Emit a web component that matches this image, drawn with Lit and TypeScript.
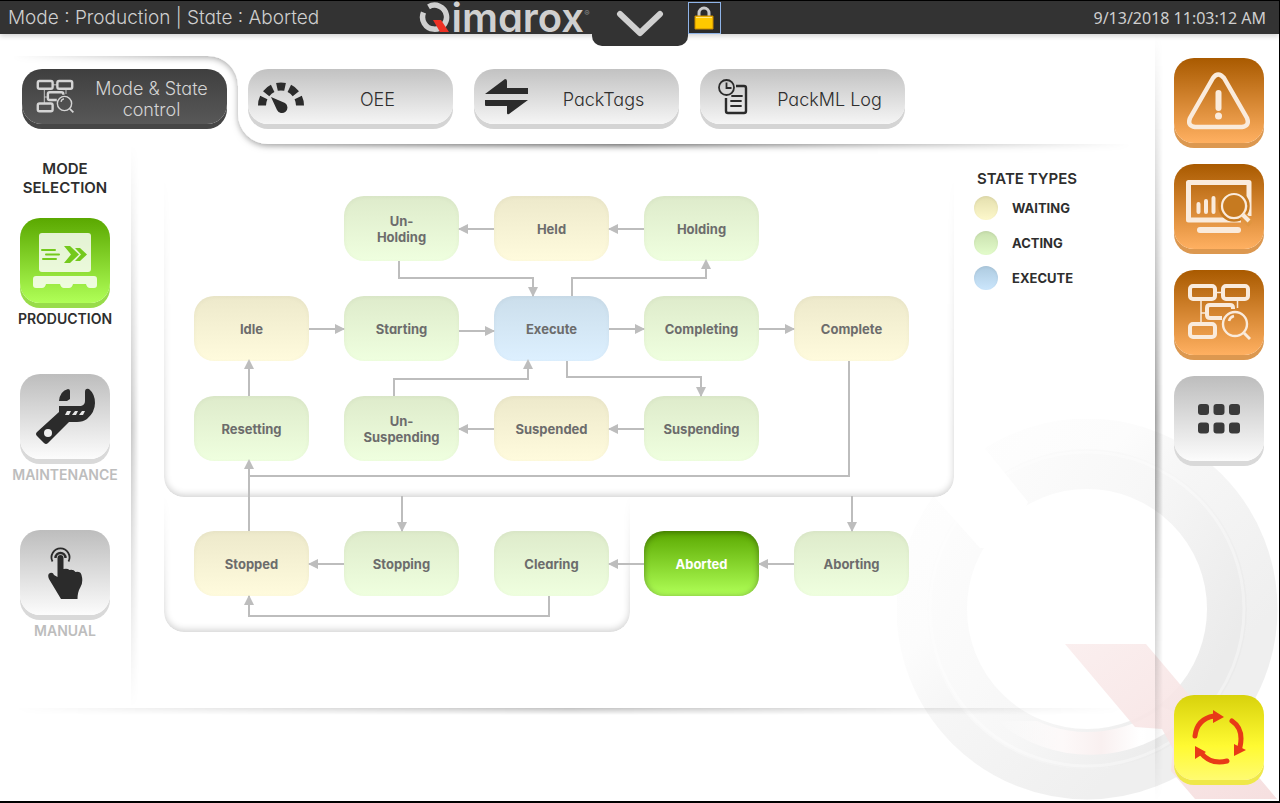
import { LitElement, html, css, svg, nothing } from "lit";
import { customElement, property, state } from "lit/decorators.js";
import { classMap } from "lit/directives/class-map.js";
import { styleMap } from "lit/directives/style-map.js";

type Kind = "waiting" | "acting" | "execute";

interface StateNode {
  label: string;
  kind: Kind;
  x: number;
  y: number;
}

const COLS = [30, 180, 330, 480, 630];
const ROWS = [52, 152, 252, 387];

const NODES: StateNode[] = [
  { label: "Un-\nHolding", kind: "acting", x: COLS[1], y: ROWS[0] },
  { label: "Held", kind: "waiting", x: COLS[2], y: ROWS[0] },
  { label: "Holding", kind: "acting", x: COLS[3], y: ROWS[0] },
  { label: "Idle", kind: "waiting", x: COLS[0], y: ROWS[1] },
  { label: "Starting", kind: "acting", x: COLS[1], y: ROWS[1] },
  { label: "Execute", kind: "execute", x: COLS[2], y: ROWS[1] },
  { label: "Completing", kind: "acting", x: COLS[3], y: ROWS[1] },
  { label: "Complete", kind: "waiting", x: COLS[4], y: ROWS[1] },
  { label: "Resetting", kind: "acting", x: COLS[0], y: ROWS[2] },
  { label: "Un-\nSuspending", kind: "acting", x: COLS[1], y: ROWS[2] },
  { label: "Suspended", kind: "waiting", x: COLS[2], y: ROWS[2] },
  { label: "Suspending", kind: "acting", x: COLS[3], y: ROWS[2] },
  { label: "Stopped", kind: "waiting", x: COLS[0], y: ROWS[3] },
  { label: "Stopping", kind: "acting", x: COLS[1], y: ROWS[3] },
  { label: "Clearing", kind: "acting", x: COLS[2], y: ROWS[3] },
  { label: "Aborted", kind: "acting", x: COLS[3], y: ROWS[3] },
  { label: "Aborting", kind: "acting", x: COLS[4], y: ROWS[3] },
];

/* Connector routes in canvas coordinates; each one ends at its arrow tip. */
const ROUTES = [
  "M330 85H295",
  "M480 85H445",
  "M145 185H181",
  "M295 187H331",
  "M445 185H481",
  "M595 185H631",
  "M235 117V134H369V153",
  "M408 152V134H542V115",
  "M85 252V215",
  "M230 252V235H364V215",
  "M403 215V233H537V253",
  "M330 285H295",
  "M480 285H445",
  "M685 217V332H85",
  "M85 387V315",
  "M238 352V388",
  "M688 352V388",
  "M180 420H145",
  "M480 420H445",
  "M630 420H595",
  "M385 452V472H85V451",
];

const arrowHead = (route: string) => {
  const nums = route.match(/[MHV][^MHV]*/g)!;
  let x = 0;
  let y = 0;
  let dir = "";
  for (const n of nums) {
    const v = n.slice(1).split(" ").map(Number);
    if (n[0] === "M") [x, y] = v;
    if (n[0] === "H") {
      dir = v[0] > x ? "r" : "l";
      x = v[0];
    }
    if (n[0] === "V") {
      dir = v[0] > y ? "d" : "u";
      y = v[0];
    }
  }
  const d = {
    r: `M${x} ${y}l-10-5v10z`,
    l: `M${x - 1} ${y}l10-5v10z`,
    d: `M${x} ${y}l-5-10h10z`,
    u: `M${x} ${y}l-5 10h10z`,
  }[dir];
  return svg`<path d=${d} fill="#bdbdbd" />`;
};

const flowIcon = (size: number, weight: number) => html`
  <svg width=${size} height=${size} viewBox="0 0 64 64" fill="none" stroke="currentColor" aria-hidden="true">
    <g stroke-width=${weight}>
      <rect x="3" y="5" width="25" height="13" rx="3" />
      <rect x="36" y="5" width="25" height="13" rx="3" />
      <rect x="3" y="43" width="25" height="13" rx="3" />
      <path d="M46 28v-1q0-3-3-3H23q-3 0-3 3v7q0 3 3 3h12" />
    </g>
    <path stroke-width="1.500" d="M28 11.500h8M14 18v25M14 32h6M50.500 18v9" />
    <circle cx="48" cy="43" r="12" stroke-width="2.400" />
    <path d="M42 40q1-4 5-5" stroke-width="2.500" />
    <path d="M57 52l6 6" stroke-width="3" />
  </svg>
`;

const gaugeIcon = html`
  <svg width="46" height="34" viewBox="0 0 46 34" aria-hidden="true">
    <path d="M4 25.500A19 19 0 0 1 42 25.500" pathLength="100" fill="none" stroke="#2b2b2b" stroke-width="8"
      stroke-dasharray="14 7.500" />
    <path d="M13 17l14 6a5.500 5.500 0 1 1-8 7z" fill="#2b2b2b" />
  </svg>
`;

const swapIcon = html`
  <svg width="44" height="36" viewBox="0 0 44 36" fill="#2b2b2b" aria-hidden="true">
    <path d="M0 15L20 0q2 0 2 2v7h21v6zM0 21h43L24 35q-2 1-2-1v-7H1q-1 0-1-1z" />
  </svg>
`;

const logIcon = html`
  <svg width="30" height="36" viewBox="0 0 30 36" fill="none" stroke="#2b2b2b" aria-hidden="true">
    <circle cx="8.500" cy="8.500" r="7.500" stroke-width="1.800" />
    <path d="M8.500 3.500v5.500h5" stroke-width="1.800" />
    <path d="M18 7h8q2 0 2 2v23q0 2-2 2H10q-2 0-2-2V19" stroke-width="2.400" />
    <path d="M14 17h10M13 22h10M13 27h10" stroke-width="1.800" stroke-linecap="round" />
  </svg>
`;

const palletIcon = html`
  <svg width="64" height="56" viewBox="0 0 64 56" aria-hidden="true">
    <rect x="6" width="52" height="39" rx="3" fill="#fff" fill-opacity=".82" />
    <path d="M3 43h58q3 0 3 3v6q0 3-3 3h-4q-3 0-4-4h-13q-1 4-4 4h-5q-3 0-4-4H13q-1 4-4 4H3q-3 0-3-3v-6q0-3 3-3z"
      fill="#fff" fill-opacity=".82" />
    <path d="M9 17h13M13 21.500h13M10 26h13" stroke="#74c91c" stroke-width="2" stroke-linecap="round" />
    <path d="M31 13h6l9 8.500-9 8.500h-6l7-8.500z" fill="#74c91c" />
    <path d="M42 15h5l7 6.500-7 6.500h-5l6-6.500z" fill="#74c91c" />
  </svg>
`;

const wrenchIcon = html`
  <svg width="60" height="58" viewBox="0 0 60 58" aria-hidden="true">
    <path
      d="M24 13Q25 3 33 1q2 0 2 2v8l-3 2zM24 18h22q4-1 4-5V4q0-4 4-3q6 5 6 14q0 9-8 16q-4 3-10 3H34L13 55q-2 2-4 0l-7-7q-2-2 0-4L24 24z"
      fill="#2b2b2b" />
    <circle cx="13" cy="45" r="4" fill="#efefef" />
    <path d="M32 23h4l-2 4h-4zM40 23h3l-2 4h-4zM47 23h3l-2 4h-4z" fill="#e6e6e6" />
  </svg>
`;

const tapIcon = html`
  <svg width="36" height="54" viewBox="0 0 36 54" aria-hidden="true">
    <path d="M5.500 15.500a9 9 0 1 1 16 0" fill="none" stroke="#2b2b2b" stroke-width="1.800" />
    <path d="M8.500 12a5 5 0 1 1 10 0" fill="none" stroke="#2b2b2b" stroke-width="2.400" />
    <path
      d="M10.500 31V12q0-3 3-3t3 3v11q4-1 6 1q4-1 6 2q5-1 6 3q2 7-1 12q-3 5-3 12H14L2 33q-2-5 1-6t4 2z"
      fill="#2b2b2b" />
  </svg>
`;

const alertIcon = html`
  <svg width="64" height="58" viewBox="0 0 64 58" fill="none" stroke="currentColor" aria-hidden="true">
    <path d="M26 6q5-7 11 0l23 40q3 8-5 9H8q-8-1-5-9z" stroke-width="4.500" stroke-linejoin="round" />
    <path d="M31.500 21v15" stroke-width="6" stroke-linecap="round" />
    <circle cx="31.500" cy="44" r="3.500" fill="currentColor" stroke="none" />
  </svg>
`;

const monitorIcon = html`
  <svg width="66" height="54" viewBox="0 0 66 54" fill="none" stroke="currentColor" aria-hidden="true">
    <path d="M63 36V2.500H2.500V40H55" stroke-width="5" stroke-linejoin="round" />
    <path d="M12.500 24v8M20 21v11M27.500 18v14" stroke-width="4" stroke-linecap="round" />
    <circle cx="48" cy="26" r="14.500" stroke="#c67a20" stroke-width="2.500" />
    <path d="M56 35l9 9" stroke="#e09540" stroke-width="8" />
    <circle cx="48" cy="26" r="12" fill="#c67a20" stroke-width="2.200" />
    <path d="M57 35l6 6" stroke-width="4" />
    <path d="M14 50h38" stroke-width="6" stroke-linecap="round" />
  </svg>
`;

const gridIcon = html`
  <svg width="42" height="30" viewBox="0 0 42 30" fill="#3a3a3a" aria-hidden="true">
    ${[0, 15.5, 31].map((x) => [0, 18.5].map((y) => svg`<rect x=${x} y=${y} width="11" height="11" rx="3" />`))}
  </svg>
`;

const cycleIcon = html`
  <svg width="54" height="56" viewBox="0 0 54 56" fill="#e83a17" aria-hidden="true">
    <g fill="none" stroke="#e83a17" stroke-width="5" stroke-linecap="round">
      <path d="M3 26Q5 9 22 6" />
      <path d="M40 11Q52 19 48 37" />
      <path d="M35 51Q19 55 9 43" />
    </g>
    <path d="M21 0l11 7-11 6zM42 34l12 6-12 6zM3 36l11 6-11 7z" />
  </svg>
`;

@customElement("ring-watermark")
export class RingWatermark extends LitElement {
  static styles = css`
    :host {
      display: block;
    }
    .art {
      display: block;
    }
  `;

  render() {
    return html`
      <svg class="art" width="382" height="382" viewBox="-190 -190 382 382" aria-hidden="true">
        <defs>
          <linearGradient id="outer" gradientUnits="userSpaceOnUse" x1="-120" y1="-190" x2="130" y2="60">
            <stop offset="0" stop-color="#fefefe" />
            <stop offset="0.350" stop-color="#fcfcfc" />
            <stop offset="0.550" stop-color="#f6f6f6" />
            <stop offset="1" stop-color="#efefef" />
          </linearGradient>
          <linearGradient id="inner" gradientUnits="userSpaceOnUse" x1="-120" y1="-100" x2="140" y2="40">
            <stop offset="0" stop-color="#fcfcfc" />
            <stop offset="0.500" stop-color="#f7f7f7" />
            <stop offset="1" stop-color="#ebebeb" />
          </linearGradient>
          <linearGradient id="glint" x1="0" x2="1">
            <stop offset="0" stop-color="#fff" stop-opacity="0" />
            <stop offset="0.350" stop-color="#fdf9f9" />
            <stop offset="0.550" stop-color="#f9f0f0" />
            <stop offset="0.750" stop-color="#fff" />
            <stop offset="1" stop-color="#fff" stop-opacity="0.800" />
          </linearGradient>
          <linearGradient id="tail" x1="0" y1="0" x2="1" y2="1">
            <stop offset="0" stop-color="#faeded" />
            <stop offset="1" stop-color="#f5dcdc" />
          </linearGradient>
          <mask id="gap">
            <rect x="-190" y="-190" width="384" height="384" fill="#fff" />
            <path d="M-107-61L-222-190H-126L-59-107L-80-60z" fill="#000" />
          </mask>
        </defs>
        <g fill="none" mask="url(#gap)">
          <circle r="175" stroke="url(#outer)" stroke-width="31" />
          <circle r="140" stroke="url(#inner)" stroke-width="40" />
          <circle r="157" stroke="#fff" stroke-opacity="0.350" stroke-width="3" />
        </g>
        <path d="M-90 112A144 144 0 0 0 100 108L75 98A122 122 0 0 1-50 112z" fill="url(#glint)" />
        <path d="M-22 35H59L190 190H108L84 162L86 140L75 120L48 118z" fill="url(#tail)" fill-opacity="0.900" />
      </svg>
    `;
  }
}

@customElement("tile-button")
export class TileButton extends LitElement {
  @property() tone = "grey";
  @property() label = "";

  static styles = css`
    :host {
      display: block;
      height: 90px;
    }
    .tile {
      display: flex;
      align-items: center;
      justify-content: center;
      width: 90px;
      height: 85px;
      padding: 0;
      border: 0;
      border-radius: 20px;
      cursor: pointer;
    }
    .grey {
      background: linear-gradient(#bdbdbd, #fcfcfc);
      box-shadow: 0 5px 0 #d9d9d9;
    }
    .green {
      background: linear-gradient(#5aa800, #b0ff57);
      box-shadow: 0 5px 0 #98dc4a;
    }
    .orange {
      color: #faebdc;
      background: linear-gradient(#a95a00, #ffb061);
      box-shadow: 0 5px 0 #dc9850;
    }
    .yellow {
      background: linear-gradient(#d8d20c, #fffa32 60%, #fffb70);
      box-shadow: 0 5px 0 #efe84a;
    }
  `;

  render() {
    return html`
      <button class=${classMap({ tile: true, [this.tone]: true })} type="button" aria-label=${this.label}>
        <slot></slot>
      </button>
    `;
  }
}

@customElement("state-diagram")
export class StateDiagram extends LitElement {
  @property() current = "";

  static styles = css`
    :host {
      display: block;
      position: relative;
      width: 790px;
      height: 564px;
    }
    .frame {
      position: absolute;
      left: 0;
      box-sizing: border-box;
      border-radius: 0 0 20px 20px;
      box-shadow: inset 0 -2px 7px #00000030;
      mask-image: linear-gradient(transparent, #000 80%);
    }
    .running {
      top: 32px;
      width: 790px;
      height: 321px;
    }
    .stopping {
      top: 352px;
      width: 466px;
      height: 136px;
    }
    .routes {
      position: absolute;
      inset: 0;
    }
    .node {
      position: absolute;
      display: flex;
      align-items: center;
      justify-content: center;
      width: 115px;
      height: 65px;
      border-radius: 20px;
      box-shadow: inset 0 1px 5px #0000000a;
      color: #6c6c6c;
      font-size: 13px;
      font-weight: 700;
      line-height: 16px;
      text-align: center;
      white-space: pre-line;
    }
    .waiting {
      background: linear-gradient(#ede9cb, #fffbdd);
    }
    .acting {
      background: linear-gradient(#deebcb, #efffdf);
    }
    .execute {
      background: linear-gradient(#cbdeeb, #ddf0ff);
    }
    .current {
      color: #fff;
      background: linear-gradient(#5aa800, #b0ff57);
      box-shadow: inset 0 1px 6px #00000060;
    }
  `;

  render() {
    return html`
      <div class="frame running"></div>
      <div class="frame stopping"></div>
      <svg class="routes" width="790" height="564" aria-hidden="true">
        <g fill="none" stroke="#bdbdbd" stroke-width="2">${ROUTES.map((d) => svg`<path d=${d} />`)}</g>
      </svg>
      ${NODES.map(
        (n) => html`
          <div
            class=${classMap({ node: true, [n.kind]: true, current: n.label === this.current })}
            style=${styleMap({ left: `${n.x}px`, top: `${n.y}px` })}
          >${n.label}</div>
        `,
      )}
      <svg class="routes" width="790" height="564" aria-hidden="true">
        ${ROUTES.map((d) => (d.endsWith("V332H85") ? nothing : arrowHead(d)))}
      </svg>
    `;
  }
}

@customElement("app-root")
export class AppRoot extends LitElement {
  @state() private mode = "Production";
  @state() private machineState = "Aborted";

  static styles = css`
    :host {
      display: flex;
      flex-direction: column;
      position: relative;
      box-sizing: border-box;
      min-height: 100vh;
      overflow: hidden;
      border: solid #000;
      border-width: 1px 1px 2px 0;
      background: #fff;
      color: #2e2e2e;
      font-family: "Century Gothic", Inter, "Noto Sans", sans-serif;
      font-feature-settings: "cv11";
    }
    .watermark {
      position: absolute;
      right: 0;
      bottom: 0;
    }
    .bar {
      position: relative;
      z-index: 1;
      display: grid;
      grid-template: 33px / 1fr 96px 1fr;
      background: #333;
      color: #cfcfcf;
      box-shadow: 0 2px 5px #0000002e;
    }
    .bar-left,
    .bar-right {
      display: flex;
      align-items: center;
      justify-content: space-between;
    }
    .bar-left {
      padding: 0 2px 0 8px;
    }
    .bar-right {
      padding-right: 13px;
    }
    .status {
      font-size: 19px;
      font-weight: 300;
    }
    .brand {
      display: flex;
      align-items: center;
      height: 33px;
      color: #d0d0d0;
      font-size: 40px;
      font-weight: 600;
      line-height: 33px;
    }
    .reg {
      align-self: flex-start;
      font-size: 8px;
      font-weight: 400;
      line-height: 24px;
      color: #888;
    }
    .pull {
      display: flex;
      align-items: center;
      justify-content: center;
      height: 45px;
      padding: 0;
      border: 0;
      border-radius: 0 0 10px 10px;
      background: #333;
    }
    .lock {
      display: flex;
      align-items: center;
      justify-content: center;
      box-sizing: border-box;
      width: 33px;
      height: 32px;
      padding: 0;
      border: 1px solid #8fb4e8;
      background: #2b2b2b;
    }
    .clock {
      font-family: "Noto Sans", sans-serif;
      font-size: 16px;
    }
    .body {
      position: relative;
      display: flex;
      flex: 1;
    }
    .main {
      flex: 1;
      min-width: 0;
    }
    .tabs {
      position: relative;
      display: flex;
      gap: 21px;
      height: 60px;
      padding: 35px 22px 15px;
    }
    .cutout {
      position: absolute;
      left: 0;
      top: 0;
      width: 100%;
      height: 125px;
    }
    .tab {
      position: relative;
      display: grid;
      grid-template-columns: 46px 1fr;
      column-gap: 4px;
      align-items: center;
      box-sizing: border-box;
      width: 205px;
      height: 55px;
      padding: 5px 6px 0 10px;
      border: 0;
      border-radius: 20px;
      background: linear-gradient(#c2c2c2, #f5f5f5);
      box-shadow: 0 5px 0 #d4d4d4;
      color: #2e2e2e;
      font: inherit;
      font-size: 18px;
      font-weight: 300;
      line-height: 21px;
      cursor: pointer;
    }
    .tab-icon {
      display: flex;
      justify-content: center;
      margin-top: -5px;
    }
    .selected {
      background: linear-gradient(#3f3f3f, #585858);
      box-shadow: 0 5px 0 #464646;
      color: #d4d4d4;
    }
    .content {
      display: flex;
    }
    .modes {
      width: 130px;
      padding-top: 15px;
    }
    .title {
      margin: 0;
      font-size: 15px;
      font-weight: 600;
      line-height: 19px;
      text-align: center;
    }
    .mode-list {
      display: flex;
      flex-direction: column;
      gap: 42px;
      margin: 21px 0 0;
      padding: 0;
      list-style: none;
    }
    .mode {
      display: flex;
      flex-direction: column;
      align-items: center;
      height: 114px;
      color: #bdbdbd;
      font-size: 14px;
      font-weight: 600;
      line-height: 22px;
    }
    .chosen {
      color: #2e2e2e;
    }
    .rule {
      width: 8px;
      margin-left: 1px;
      background: linear-gradient(90deg, #00000038, #00000000);
      mask-image: linear-gradient(transparent, #000 50%, transparent);
    }
    .diagram {
      margin-left: 25px;
    }
    .legend {
      padding: 25px 0 0 20px;
    }
    .legend-title {
      padding-left: 3px;
      line-height: 20px;
    }
    .keys {
      display: flex;
      flex-direction: column;
      gap: 11px;
      margin: 7px 0 0;
      padding: 0;
      list-style: none;
    }
    .key {
      display: flex;
      align-items: center;
      gap: 14px;
      font-size: 13px;
      font-weight: 700;
      line-height: 24px;
    }
    .dot {
      width: 24px;
      height: 24px;
      border-radius: 50%;
      box-shadow: inset 0 1px 3px #00000010;
    }
    .waiting {
      background: linear-gradient(#e4dfae, #fdf8cb);
    }
    .acting {
      background: linear-gradient(#c9e0ae, #e3fccb);
    }
    .execute {
      background: linear-gradient(#aecbe0, #cbe6fc);
    }
    .floor {
      height: 7px;
      margin: 0 30px 0 14px;
      background: linear-gradient(#0000003d, #00000000);
      mask-image: linear-gradient(90deg, transparent, #000 50%, transparent);
    }
    .side-rule {
      width: 8px;
      background: linear-gradient(90deg, #00000060, #00000000);
      mask-image: linear-gradient(transparent, #000 50%, transparent);
    }
    .side {
      display: flex;
      flex-direction: column;
      gap: 16px;
      padding: 24px 15px 16px 11px;
    }
    .refresh {
      margin-top: auto;
    }
  `;

  private tab(label: string, icon: unknown, selected = false) {
    return html`
      <button class=${classMap({ tab: true, selected })} type="button" role="tab" aria-selected=${selected}>
        <span class="tab-icon">${icon}</span>
        <span>${label}</span>
      </button>
    `;
  }

  private modeItem(label: string, icon: unknown) {
    const chosen = label === this.mode.toUpperCase();
    return html`
      <li class=${classMap({ mode: true, chosen })}>
        <tile-button tone=${chosen ? "green" : "grey"} label=${label} @click=${() => this.pick(label)}>
          ${icon}
        </tile-button>
        <span>${label}</span>
      </li>
    `;
  }

  private pick(label: string) {
    this.mode = label[0] + label.slice(1).toLowerCase();
  }

  render() {
    return html`
      <ring-watermark class="watermark"></ring-watermark>
      <header class="bar">
        <div class="bar-left">
          <span class="status">Mode : ${this.mode} | State : ${this.machineState}</span>
          <span class="brand">
            <svg width="32" height="32" viewBox="0 0 32 32" aria-hidden="true">
              <path d="M9.500 4.800A12 12 0 1 1 4.500 10.500" fill="none" stroke="#d0d0d0" stroke-width="5.500" />
              <path d="M14 18h8l8 12h-9z" fill="#ee3124" />
            </svg>
            <span>imarox</span><span class="reg">®</span>
          </span>
        </div>
        <button class="pull" type="button" aria-label="Open menu">
          <svg width="48" height="28" viewBox="0 0 48 28" fill="none" aria-hidden="true">
            <path d="M4 4l20 19L44 4" stroke="#d0d0d0" stroke-width="6" stroke-linecap="round" stroke-linejoin="round" />
          </svg>
        </button>
        <div class="bar-right">
          <button class="lock" type="button" aria-label="Lock">
            <svg width="20" height="24" viewBox="0 0 20 24" aria-hidden="true">
              <path d="M5 11V7a5 5 0 0 1 10 0v4" fill="none" stroke="#c9c9c9" stroke-width="3" />
              <path d="M1 10h18v13H1z" fill="#ffc800" stroke="#c98a00" />
              <path d="M2 11h16v1H2z" fill="#ffe680" />
            </svg>
          </button>
          <time class="clock">9/13/2018 11:03:12 AM</time>
        </div>
      </header>
      <div class="body">
        <main class="main">
          <div class="tabs" role="tablist">
            <svg class="cutout" aria-hidden="true">
              <defs>
                <linearGradient id="fade">
                  <stop offset="0.010" stop-color="#fff" stop-opacity="0" />
                  <stop offset="0.150" stop-color="#fff" stop-opacity="0.450" />
                  <stop offset="0.540" stop-color="#fff" />
                  <stop offset="0.980" stop-color="#fff" stop-opacity="0" />
                </linearGradient>
                <mask id="sides" maskUnits="userSpaceOnUse" x="0" y="0" width="100%" height="125">
                  <rect width="100%" height="125" fill="url(#fade)" />
                </mask>
                <filter id="cast" filterUnits="userSpaceOnUse" x="-20" y="0" width="3000" height="125">
                  <feDropShadow dx="0" dy="2" stdDeviation="3" flood-opacity="0.650" />
                </filter>
              </defs>
              <g mask="url(#sides)">
                <path
                  d="M-20-20H2900V110H268A30 30 0 0 1 238 80V52A30 30 0 0 0 208 22H-20z"
                  fill="#fff"
                  filter="url(#cast)"
                />
              </g>
            </svg>
            ${this.tab("Mode & State control", flowIcon(38, 4), true)} ${this.tab("OEE", gaugeIcon)}
            ${this.tab("PackTags", swapIcon)} ${this.tab("PackML Log", logIcon)}
          </div>
          <div class="content">
            <section class="modes">
              <h2 class="title">MODE<br />SELECTION</h2>
              <ul class="mode-list">
                ${this.modeItem("PRODUCTION", palletIcon)} ${this.modeItem("MAINTENANCE", wrenchIcon)}
                ${this.modeItem("MANUAL", tapIcon)}
              </ul>
            </section>
            <div class="rule"></div>
            <state-diagram class="diagram" .current=${this.machineState}></state-diagram>
            <section class="legend">
              <h2 class="title legend-title">STATE TYPES</h2>
              <ul class="keys">
                <li class="key"><span class="dot waiting"></span>WAITING</li>
                <li class="key"><span class="dot acting"></span>ACTING</li>
                <li class="key"><span class="dot execute"></span>EXECUTE</li>
              </ul>
            </section>
          </div>
          <div class="floor"></div>
        </main>
        <div class="side-rule"></div>
        <nav class="side">
          <tile-button tone="orange" label="Alarms">${alertIcon}</tile-button>
          <tile-button tone="orange" label="Monitoring">${monitorIcon}</tile-button>
          <tile-button tone="orange" label="State control">${flowIcon(64, 4)}</tile-button>
          <tile-button tone="grey" label="Menu">${gridIcon}</tile-button>
          <tile-button class="refresh" tone="yellow" label="Refresh">${cycleIcon}</tile-button>
        </nav>
      </div>
    `;
  }
}
